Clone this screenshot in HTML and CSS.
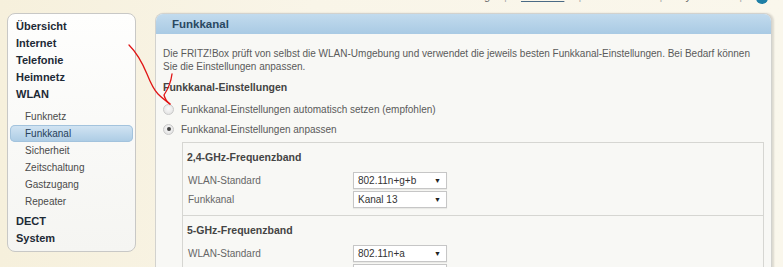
FILE: index.html
```html
<!DOCTYPE html>
<html lang="de">
<head>
    <meta charset="UTF-8">
    <meta name="viewport" content="width=device-width, initial-scale=1.0">
    <title>FRITZ!Box - Funkkanal</title>
    <link rel="stylesheet" href="styles.css">
</head>
<body>
    <div class="topbar">
        <div class="toplinks">
            <span>Anmeldung</span>
            <span class="sep">|</span>
            <span class="current">Erweitert</span>
            <span class="sep">|</span>
            <span>Handbuch</span>
            <span class="sep">|</span>
            <span>MyFRITZ!</span>
            <span class="sep">|</span>
            <span class="help"></span>
        </div>
    </div>

    <div class="main">
        <nav class="sidebar">
            <a class="menu">Übersicht</a>
            <a class="menu">Internet</a>
            <a class="menu">Telefonie</a>
            <a class="menu">Heimnetz</a>
            <a class="menu">WLAN</a>
            <div class="submenu">
                <a class="sub">Funknetz</a>
                <a class="sub active">Funkkanal</a>
                <a class="sub">Sicherheit</a>
                <a class="sub">Zeitschaltung</a>
                <a class="sub">Gastzugang</a>
                <a class="sub">Repeater</a>
            </div>
            <a class="menu">DECT</a>
            <a class="menu">System</a>
        </nav>

        <div class="panel">
            <div class="panel-head">Funkkanal</div>
            <div class="panel-body">
                <p class="intro">Die FRITZ!Box prüft von selbst die WLAN-Umgebung und verwendet die jeweils besten Funkkanal-Einstellungen. Bei Bedarf können Sie die Einstellungen anpassen.</p>
                <h3>Funkkanal-Einstellungen</h3>
                <div class="radio-row"><span class="radio"></span>Funkkanal-Einstellungen automatisch setzen (empfohlen)</div>
                <div class="radio-row"><span class="radio checked"></span>Funkkanal-Einstellungen anpassen</div>

                <div class="bands">
                    <div class="band">
                        <h4>2,4-GHz-Frequenzband</h4>
                        <div class="row">
                            <span class="label">WLAN-Standard</span>
                            <span class="select">802.11n+g+b<i>▼</i></span>
                        </div>
                        <div class="row">
                            <span class="label">Funkkanal</span>
                            <span class="select">Kanal 13<i>▼</i></span>
                        </div>
                    </div>
                    <div class="band">
                        <h4>5-GHz-Frequenzband</h4>
                        <div class="row">
                            <span class="label">WLAN-Standard</span>
                            <span class="select">802.11n+a<i>▼</i></span>
                        </div>
                        <div class="row">
                            <span class="label">Funkkanal</span>
                            <span class="select">Kanal 36<i>▼</i></span>
                        </div>
                    </div>
                </div>
            </div>
        </div>
    </div>

    <!-- red hand drawn arrow, lies over the page -->
    <svg class="scribble" width="783" height="267" viewBox="0 0 783 267">
        <path d="M129 45 C136 52 142 62 147 74 C151 84 154 90 158 94 C162 98 166 101 170 104" />
        <path d="M172 74 C171 82 168 89 164 95 C165 99 167 102 170 104" />
    </svg>
</body>
</html>
```

FILE: styles.css
```css
body {
    margin: 0;
    font-family: "Liberation Sans", Arial, sans-serif;
    background: linear-gradient(90deg, #f6f0dc 0%, #f9f5e8 40%, #faf7ec 100%);
    height: 267px;
    overflow: hidden;
    position: relative;
}
.topbar {
    height: 13px;
    overflow: hidden;
}
.toplinks {
    display: flex;
    justify-content: flex-end;
    align-items: center;
    gap: 14px;
    margin-top: -12px;
    padding-right: 15px;
    font-size: 11px;
    line-height: 13px;
    color: #666;
}
.toplinks .current {
    text-decoration: underline;
    color: #4a6a85;
}
.toplinks .sep {
    color: #aaa;
}
.help {
    display: inline-block;
    width: 12px;
    height: 12px;
    border-radius: 50%;
    background: #1f7fa6;
    margin-top: 4px;
}
.main {
    display: flex;
    align-items: flex-start;
}
.sidebar {
    margin-left: 7px;
    width: 127px;
    border: 1px solid #c8c8c6;
    border-radius: 8px;
    background: linear-gradient(#fefefd, #f5f5f2);
    padding: 4px 0 4px;
    display: flex;
    flex-direction: column;
}
.menu {
    display: block;
    padding-left: 8px;
    font-size: 11px;
    font-weight: bold;
    line-height: 17px;
    color: #1d2a36;
}
.submenu {
    margin: 5px 0 3px;
    display: flex;
    flex-direction: column;
}
.sub {
    display: block;
    margin: 0 2px;
    padding-left: 15px;
    font-size: 10px;
    line-height: 17px;
    color: #4a4a4a;
}
.sub.active {
    background: linear-gradient(#d3e5f3, #abcbe4);
    border-radius: 5px;
    box-shadow: inset 0 0 0 1px #a3c3dd;
    color: #27405a;
}
.panel {
    margin-left: 19px;
    width: 615px;
    height: 260px;
    background: #f8f8f5;
    border: 1px solid #d2d2ce;
    border-bottom: 0;
    border-radius: 8px 8px 0 0;
    box-shadow: 2px 0 2px rgba(0, 0, 0, 0.12);
}
.panel-head {
    height: 20px;
    line-height: 21px;
    padding-left: 16px;
    background: linear-gradient(#c2dbee, #a9cae4);
    border-radius: 7px 7px 0 0;
    font-size: 11.5px;
    font-weight: bold;
    color: #2a4862;
}
.panel-body {
    padding: 13px 7px 0 7px;
}
.intro {
    margin: 0;
    font-size: 10px;
    line-height: 13px;
    color: #5a5a5a;
}
h3 {
    margin: 7px 0 0;
    font-size: 10.5px;
    line-height: 14px;
    color: #444;
}
.radio-row {
    display: flex;
    align-items: center;
    gap: 7px;
    height: 20px;
    font-size: 10px;
    color: #5a5a5a;
}
.radio-row:first-of-type {
    margin-top: 5px;
}
.radio {
    width: 9px;
    height: 9px;
    border-radius: 50%;
    border: 1px solid #c9c9c9;
    background: radial-gradient(circle at 50% 40%, #fafafa, #dedede);
    display: flex;
    align-items: center;
    justify-content: center;
}
.radio.checked::after {
    content: "";
    width: 4px;
    height: 4px;
    border-radius: 50%;
    background: #444;
}
.bands {
    margin: 3px 0 0 19px;
    border: 1px solid #d6d6d2;
    border-bottom: 0;
}
.band {
    padding: 7px 4px 6px;
}
.band + .band {
    border-top: 1px solid #d6d6d2;
}
h4 {
    margin: 0 0 7px;
    font-size: 10.5px;
    line-height: 14px;
    color: #444;
}
.row {
    display: flex;
    align-items: center;
    height: 19px;
}
.label {
    width: 165px;
    padding-left: 1px;
    font-size: 10px;
    color: #666;
}
.select {
    position: relative;
    box-sizing: border-box;
    width: 94px;
    height: 17px;
    line-height: 15px;
    padding-left: 4px;
    background: #fff;
    border: 1px solid #c6c6c6;
    box-shadow: 0 1px 1px rgba(0, 0, 0, 0.06);
    font-size: 10px;
    color: #333;
}
.select i {
    position: absolute;
    right: 5px;
    top: 0;
    font-style: normal;
    font-size: 7px;
    color: #222;
}
.scribble {
    position: absolute;
    left: 0;
    top: 0;
    pointer-events: none;
}
.scribble path {
    fill: none;
    stroke: #e01515;
    stroke-width: 1.3;
    stroke-linecap: round;
}
```
